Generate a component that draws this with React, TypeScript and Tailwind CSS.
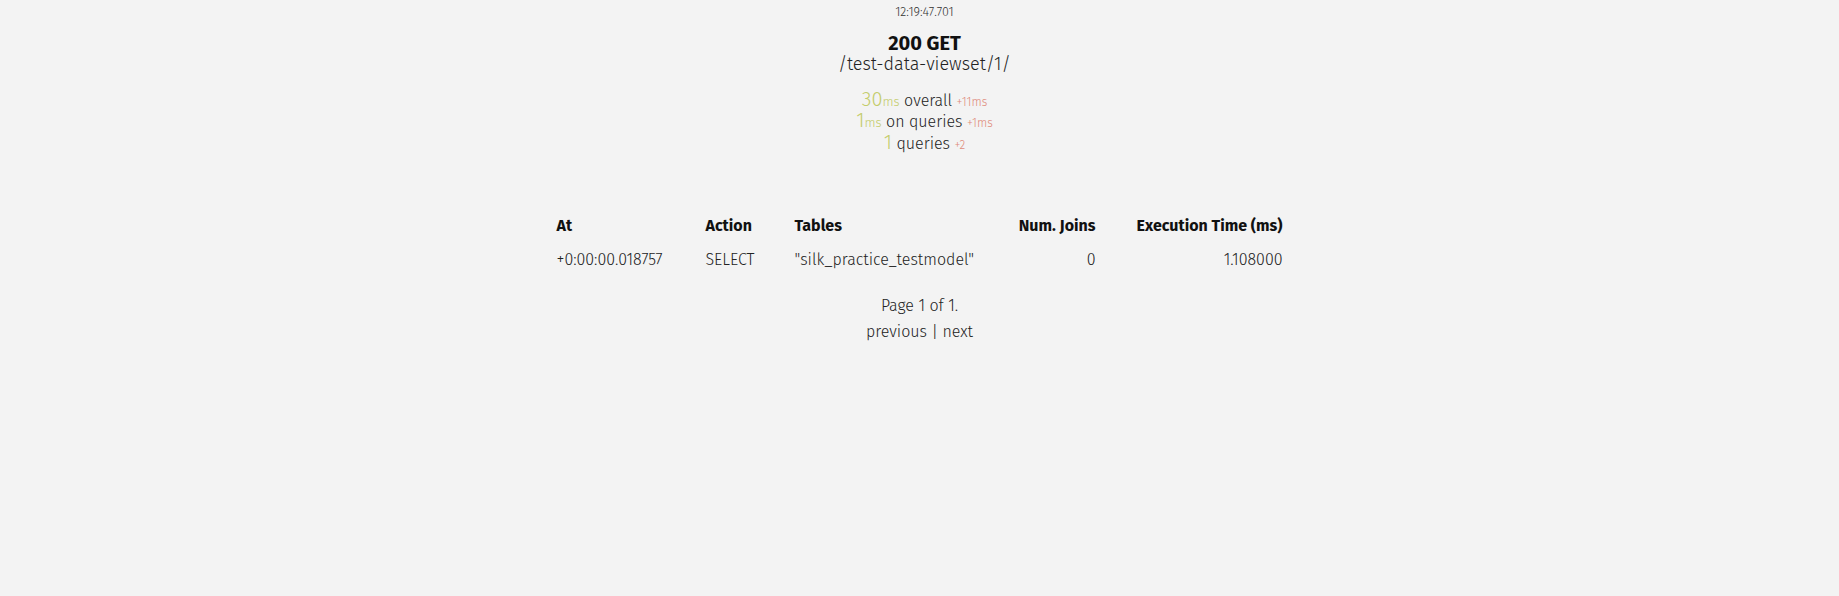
const ROWS = [
  { at: '+0:00:00.018757', action: 'SELECT', tables: '"silk_practice_testmodel"', joins: 0, time: '1.108000' },
]

const font = { fontFamily: '"Fira Sans", Lato, "Open Sans", sans-serif' }

export default function App() {
  return (
    <div style={font} className="min-h-[596px] w-full bg-[#f3f3f3] text-[#222] font-light">
      {/* 요청 요약 */}
      <div className="flex flex-col items-center pt-[4px] pl-[10px]">
        <div className="text-[12.5px] leading-[16px] text-[#333]">12:19:47.701</div>
        <div className="mt-[13px] text-[20px] leading-[21px] font-bold text-[#111]">200 GET</div>
        <div className="text-[18px] leading-[21px] text-[#222]">/test-data-viewset/1/</div>

        <div className="mt-[14px] flex flex-col items-center">
          <div className="h-[21px] leading-[21px] whitespace-nowrap">
            <span className="text-[20px] text-[#c3cc6a]">30</span>
            <span className="text-[13px] text-[#c3cc6a]">ms</span>
            <span className="text-[16px]"> overall </span>
            <span className="text-[12px] text-[#e08b7b]">+11ms</span>
          </div>
          <div className="h-[21px] leading-[21px] whitespace-nowrap">
            <span className="text-[20px] text-[#c3cc6a]">1</span>
            <span className="text-[13px] text-[#c3cc6a]">ms</span>
            <span className="text-[16px]"> on queries </span>
            <span className="text-[12px] text-[#e08b7b]">+1ms</span>
          </div>
          <div className="h-[22px] leading-[22px] whitespace-nowrap">
            <span className="text-[20px] text-[#c3cc6a]">1</span>
            <span className="text-[16px]"> queries </span>
            <span className="text-[12px] text-[#e08b7b]">+2</span>
          </div>
        </div>
      </div>

      {/* 쿼리 테이블 */}
      <div className="mt-[61px] flex justify-center">
        <div className="w-[726px] text-[16px]">
          <div className="grid grid-cols-[149px_89px_200px_101px_187px] h-[24px] leading-[24px] font-bold text-[#111]">
            <div>At</div>
            <div>Action</div>
            <div>Tables</div>
            <div className="text-right">Num. Joins</div>
            <div className="text-right">Execution Time (ms)</div>
          </div>
          {ROWS.map(r => (
            <div key={r.at} className="mt-[10px] grid grid-cols-[149px_89px_200px_101px_187px] h-[24px] leading-[24px]">
              <div>{r.at}</div>
              <div>{r.action}</div>
              <div className="whitespace-nowrap">{r.tables}</div>
              <div className="text-right">{r.joins}</div>
              <div className="text-right">{r.time}</div>
            </div>
          ))}
        </div>
      </div>

      {/* 페이지 */}
      <div className="mt-[21px] flex flex-col items-center text-[16px] text-[#222]">
        <div className="leading-[26px]">Page 1 of 1.</div>
        <div className="leading-[26px]">previous | next</div>
      </div>
    </div>
  )
}
